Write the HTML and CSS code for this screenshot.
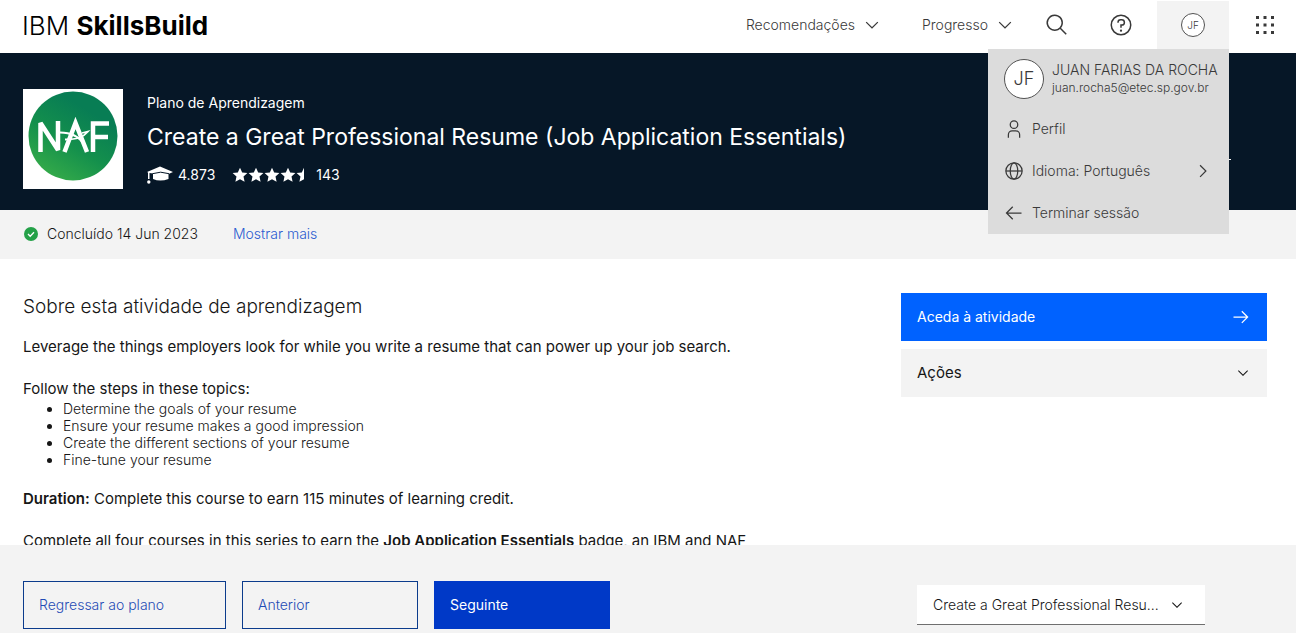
FILE: index.html
```html
<!DOCTYPE html>
<html lang="pt">
<head>
<meta charset="utf-8">
<meta name="viewport" content="width=device-width, initial-scale=1">
<title>IBM SkillsBuild</title>
<link rel="stylesheet" href="styles.css">
</head>
<body>
<header class="topbar">
  <a class="brand" href="#">IBM <b>SkillsBuild</b></a>
  <nav class="topnav">
    <button class="nav-item" type="button">Recomendações
      <svg class="icon" width="20" height="20" viewBox="0 0 32 32"><path d="M16 22 6 12l1.400-1.400 8.600 8.600 8.600-8.600L26 12z"/></svg></button>
    <button class="nav-item" type="button">Progresso
      <svg class="icon" width="20" height="20" viewBox="0 0 32 32"><path d="M16 22 6 12l1.400-1.400 8.600 8.600 8.600-8.600L26 12z"/></svg></button>
  </nav>
  <button class="tool" type="button" aria-label="Pesquisar">
    <svg class="icon" width="24" height="24" viewBox="0 0 32 32"><path d="M29 27.600 21.400 20A11 11 0 1 0 20 21.400L27.600 29zM4 13a9 9 0 1 1 18 0 9 9 0 0 1-18 0z"/></svg></button>
  <button class="tool" type="button" aria-label="Ajuda">
    <svg class="icon" width="24" height="24" viewBox="0 0 32 32"><path d="M16 2a14 14 0 1 0 0 28 14 14 0 0 0 0-28zm0 26a12 12 0 1 1 0-24 12 12 0 0 1 0 24z"/><circle cx="16" cy="23.500" r="1.500"/><path d="M17 8h-1.500A4.500 4.500 0 0 0 11 12.500v.5h2v-.5a2.500 2.500 0 0 1 2.500-2.500H17a2.500 2.500 0 0 1 0 5h-2v4.500h2V17a4.500 4.500 0 0 0 0-9z"/></svg></button>
  <div class="account">
    <button class="account-toggle" type="button" aria-expanded="true"><span class="avatar avatar-small">JF</span></button>
    <div class="account-menu">
      <div class="profile">
        <span class="avatar">JF</span>
        <div><div class="profile-name">JUAN FARIAS DA ROCHA</div><div class="profile-mail">juan.rocha5@etec.sp.gov.br</div></div>
      </div>
      <a class="menu-item" href="#">
        <svg class="icon" width="20" height="20" viewBox="0 0 32 32"><path d="M16 4a5 5 0 1 1 0 10 5 5 0 0 1 0-10m0-2a7 7 0 1 0 0 14 7 7 0 0 0 0-14zM26 30h-2v-5a5 5 0 0 0-5-5h-6a5 5 0 0 0-5 5v5H6v-5a7 7 0 0 1 7-7h6a7 7 0 0 1 7 7z"/></svg><span>Perfil</span></a>
      <a class="menu-item" href="#">
        <svg class="stroke" width="20" height="20" viewBox="0 0 32 32"><circle cx="16" cy="16" r="13"/><ellipse cx="16" cy="16" rx="6" ry="13"/><path d="M3 16h26"/></svg><span>Idioma: Português</span>
        <svg class="icon menu-arrow" width="20" height="20" viewBox="0 0 32 32"><path d="M22 16 12 26l-1.400-1.400 8.600-8.600-8.600-8.600L12 6z"/></svg></a>
      <a class="menu-item" href="#">
        <svg class="stroke" width="20" height="20" viewBox="0 0 32 32"><path d="M28 16H5M14 6 4 16l10 10"/></svg><span>Terminar sessão</span></a>
    </div>
  </div>
  <button class="tool tool-last" type="button" aria-label="Aplicações">
    <svg class="icon" width="24" height="24" viewBox="0 0 24 24"><path d="M3 3h3v3H3zm7.500 0h3v3h-3zM18 3h3v3h-3zM3 10.500h3v3H3zm7.500 0h3v3h-3zm7.500 0h3v3h-3zM3 18h3v3H3zm7.500 0h3v3h-3zm7.500 0h3v3h-3z"/></svg></button>
</header>

<section class="hero">
  <svg class="logo" width="100" height="100" viewBox="0 0 100 100" role="img" aria-label="NAF">
    <defs><linearGradient id="naf" x1="0.200" y1="0.950" x2="0.650" y2="0.200"><stop offset="0" stop-color="#35ab49"/><stop offset="0.500" stop-color="#14904c"/><stop offset="1" stop-color="#087d54"/></linearGradient></defs>
    <rect width="100" height="100" fill="#fff"/><circle cx="50" cy="47" r="44.500" fill="url(#naf)"/>
    <g fill="none" stroke="#fff" stroke-width="4.500"><path stroke-linejoin="bevel" d="M17.500 63V34L35 61V32"/><path d="M41.500 63 52.500 34 64 63M70 63V34.500h16M70 48h15"/><path stroke-width="1.800" d="M37 43.500c11 0 19 4 24 12M42 50.500c12 0 18-2 23-8l-6 1.500"/></g>
  </svg>
  <div class="hero-text">
    <div class="kind">Plano de Aprendizagem</div>
    <h1 class="title">Create a Great Professional Resume (Job Application Essentials)</h1>
    <div class="stats">
      <svg class="cap" width="27" height="20" viewBox="0 0 27 20"><path d="M0 7 13 1.500 26 7l-4.500 2V14q-8.500 3-15.500 0V8.500L2.500 8v6H1V7.500z"/><path d="M5.500 8.700q8-3 16.500 0" fill="none" stroke="#061727"/><circle cx="1.800" cy="17" r="1.700"/></svg>
      <span class="count">4.873</span>
      <svg class="stars" width="80" height="16" viewBox="0 0 80 16" role="img" aria-label="4,5"><defs><path id="star" d="m8 .8 2.200 4.700 5.200.6-3.900 3.500 1.100 5.200L8 12.200l-4.600 2.600 1.100-5.200L.6 6.100l5.200-.6z"/></defs><use href="#star"/><use href="#star" x="16"/><use href="#star" x="32"/><use href="#star" x="48"/><path d="M72 .8v11.400l-4.600 2.600 1.100-5.200-3.900-3.500 5.200-.6z"/></svg>
      <span>143</span>
    </div>
  </div>
  <span class="hero-rule"></span>
</section>

<section class="status">
  <svg width="16" height="16" viewBox="0 0 16 16"><circle cx="8" cy="8" r="7" fill="#24a148"/><path d="m5 8 2.200 2.200L11 6.300" fill="none" stroke="#fff" stroke-width="1.300"/></svg>
  <span class="status-text">Concluído 14 Jun 2023</span>
  <a class="more" href="#">Mostrar mais</a>
</section>

<main class="content">
  <article class="about">
    <h2 class="about-title">Sobre esta atividade de aprendizagem</h2>
    <p class="para">Leverage the things employers look for while you write a resume that can power up your job search.</p>
    <p class="para para-list">Follow the steps in these topics:</p>
    <ul class="topics">
      <li>Determine the goals of your resume</li>
      <li>Ensure your resume makes a good impression</li>
      <li>Create the different sections of your resume</li>
      <li>Fine-tune your resume</li>
    </ul>
    <p class="para"><b>Duration:</b> Complete this course to earn 115 minutes of learning credit.</p>
    <p class="para">Complete all four courses in this series to earn the <b>Job Application Essentials</b> badge, an IBM and NAF</p>
  </article>
  <aside class="actions">
    <a class="launch" href="#">Aceda à atividade
      <svg class="icon" width="20" height="20" viewBox="0 0 32 32"><path d="m18 6-1.400 1.400 7.500 7.600H4v2h20.100l-7.500 7.600L18 26l10-10z"/></svg></a>
    <button class="more-actions" type="button">Ações
      <svg class="icon" width="16" height="16" viewBox="0 0 32 32"><path d="M16 22 6 12l1.400-1.400 8.600 8.600 8.600-8.600L26 12z"/></svg></button>
  </aside>
</main>

<footer class="pager">
  <button class="btn btn-back" type="button">Regressar ao plano</button>
  <button class="btn" type="button">Anterior</button>
  <button class="btn btn-next" type="button">Seguinte</button>
  <div class="picker">
    <select class="picker-select" aria-label="Atividade"><option>Create a Great Professional Resu...</option></select>
    <svg class="icon picker-arrow" width="16" height="16" viewBox="0 0 32 32"><path d="M16 22 6 12l1.400-1.400 8.600 8.600 8.600-8.600L26 12z"/></svg>
  </div>
</footer>
</body>
</html>
```
FILE: styles.css
```css
* { box-sizing: border-box; }
body {
  margin: 0;
  height: 100vh;
  display: flex;
  flex-direction: column;
  overflow: hidden;
  background: #fff;
  color: #161616;
  font: 300 14px/18px Inter, "Liberation Sans", sans-serif;
}
button, select { font: inherit; color: inherit; border: 0; border-radius: 0; background: none; padding: 0; text-align: left; }
a { color: inherit; text-decoration: none; }
svg { flex: none; }
b { font-weight: 600; }
.icon { fill: currentColor; }
.stroke { fill: none; stroke: currentColor; stroke-width: 2; }

.topbar { display: flex; align-items: center; flex: none; height: 53px; padding: 0 7px 4px 22px; color: #393939; }
.brand { color: #000; font-size: 26px; line-height: 32px; margin-right: auto; padding-top: 2px; }
.brand b { font-weight: 700; }
.topnav { display: flex; gap: 40px; padding-right: 18px; }
.nav-item { display: flex; align-items: center; gap: 7px; }
.tool { display: flex; align-items: center; justify-content: center; width: 48px; height: 48px; margin-right: 16px; }
.tool + .account { margin-left: -4px; }
.tool-last { margin: 0; }
.account { position: relative; margin-right: 12px; }
.account-toggle { display: flex; align-items: center; justify-content: center; width: 72px; height: 48px; background: #f3f3f3; }
.avatar { display: flex; align-items: center; justify-content: center; flex: none; width: 40px; height: 40px; border: 1px solid #525252; border-radius: 50%; background: #fff; font-size: 18px; }
.avatar-small { width: 24px; height: 24px; font-size: 10px; }
.account-menu { position: absolute; z-index: 2; top: 100%; right: 0; width: 241px; background: #dcdcdc; }
.profile { display: flex; align-items: center; gap: 8px; height: 59px; padding: 2px 16px 0; white-space: nowrap; }
.profile-mail { font-size: 12px; }
.menu-item { display: flex; align-items: center; gap: 8px; height: 42px; padding: 0 16px; }
.menu-arrow { margin-left: auto; }

.hero { display: flex; flex: none; padding: 36px 65px 21px 23px; background: #061727; color: #fff; font-weight: 400; }
.hero-text { margin-left: 24px; padding-top: 5px; }
.title { margin: 9px 0 0; font-size: 23px; line-height: 32px; font-weight: 400; white-space: nowrap; }
.stats { display: flex; align-items: center; margin-top: 12px; height: 20px; }
.cap, .stars { fill: #fff; }
.count { margin: 0 17px 0 4px; }
.stars { margin-right: 4px; }
.hero-rule { width: 16px; height: 1px; margin: 70px 0 0 auto; background: #fff; }

.status { display: flex; align-items: center; flex: none; height: 49px; padding: 0 23px 2px; background: #f3f3f3; }
.status-text { margin: 0 35px 0 8px; }
.more { color: #2a5bd0; }

.content { display: flex; justify-content: space-between; flex: 1; min-height: 0; overflow: hidden; padding: 34px 29px 0 23px; }
.about { flex: 0 1 760px; }
.about-title { margin: 0 0 15px; font-size: 19px; line-height: 27px; font-weight: 300; }
.para { margin: 0 0 18px; font-size: 15px; line-height: 24px; font-weight: 400; white-space: nowrap; }
.para-list { margin: 0 0 -1px; }
.topics { margin: 0 0 19px; padding-left: 40px; line-height: 17px; }
.actions { flex: 0 0 366px; }
.launch, .more-actions { display: flex; align-items: center; justify-content: space-between; width: 100%; height: 48px; padding: 0 16px; }
.launch { margin-bottom: 8px; background: #0062ff; color: #fff; font-weight: 400; }
.more-actions { background: #f3f3f3; font-size: 15px; font-weight: 400; }

.pager { display: flex; align-items: center; flex: none; padding: 36px 91px 4px 23px; gap: 16px; background: #f3f3f3; }
.btn { width: 176px; height: 48px; padding: 0 15px; border: 1px solid #0b3b8c; color: #1f4bb5; }
.btn-back { width: 203px; }
.btn-next { background: #0039c7; border-color: #0039c7; color: #fff; font-weight: 400; }
.picker { position: relative; width: 288px; margin-left: auto; }
.picker-select { appearance: none; width: 100%; height: 40px; padding: 0 40px 0 16px; background: #fff; border-bottom: 1px solid #6f6f6f; text-overflow: ellipsis; }
.picker-arrow { position: absolute; right: 20px; top: 12px; pointer-events: none; }
```
